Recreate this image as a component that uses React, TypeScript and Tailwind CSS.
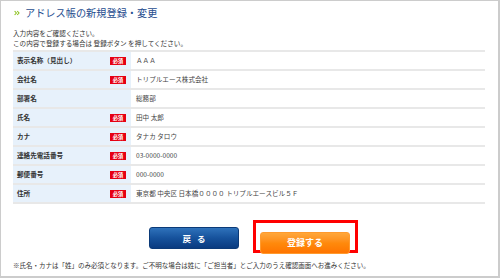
const rows = [
  { label: "表示名称（見出し）", required: true, value: "ＡＡＡ" },
  { label: "会社名", required: true, value: "トリプルエース株式会社" },
  { label: "部署名", required: false, value: "総務部" },
  { label: "氏名", required: true, value: "田中 太郎" },
  { label: "カナ", required: true, value: "タナカ タロウ" },
  { label: "連絡先電話番号", required: true, value: "03-0000-0000" },
  { label: "郵便番号", required: true, value: "000-0000" },
  { label: "住所", required: true, value: "東京都 中央区 日本橋００００ トリプルエースビル５Ｆ" },
];

export default function App() {
  return (
    <div
      className="w-[500px] h-[278px] box-border border border-r-2 border-b-2 border-[#cccccc] bg-white pl-[12px] pr-[13px] flex flex-col text-[#333333]"
      style={{ fontFamily: '"Noto Sans CJK JP", "Noto Sans", sans-serif' }}
    >
      {/* Title */}
      <div className="mt-[2px] h-[20px] flex items-center gap-[5px] pl-[1px]">
        <svg width="6" height="6" viewBox="0 0 6 6" className="shrink-0">
          <path d="M0.6 1 L2.4 3 L0.6 5" fill="none" stroke="#8cc11f" strokeWidth="1.1" />
          <path d="M3.2 1 L5 3 L3.2 5" fill="none" stroke="#8cc11f" strokeWidth="1.1" />
        </svg>
        <h1 className="text-[10.2px] leading-[20px] text-[#1f4d8f] whitespace-nowrap">
          アドレス帳の新規登録・変更
        </h1>
      </div>

      {/* Intro */}
      <div className="mt-[5px] text-[6.6px] leading-[10px] text-[#333333] whitespace-nowrap">
        <p>入力内容をご確認ください。</p>
        <p>この内容で登録する場合は 登録ボタン を押してください。</p>
      </div>

      {/* Table */}
      <div className="mt-[2px] border-t-2 border-[#e8e8e8]">
        {rows.map((row) => (
          <div key={row.label} className="flex h-[19px] border-b-2 border-[#e8e8e8]">
            <div className="w-[118px] shrink-0 bg-[#e7f1fb] flex items-center justify-between pl-[4px] pr-[5px]">
              <span className="text-[6.6px] font-bold text-[#333333] whitespace-nowrap">{row.label}</span>
              {row.required && (
                <span className="w-[16px] h-[8px] bg-[#e60012] text-white text-[5.2px] font-bold leading-[8px] text-center">
                  必須
                </span>
              )}
            </div>
            <div className="flex-1 flex items-center pl-[5px] text-[6.6px] text-[#444444] whitespace-nowrap">
              {row.value}
            </div>
          </div>
        ))}
      </div>

      {/* Buttons */}
      <div className="mt-[16px] flex items-start pl-[136px]">
        <button className="mt-[7px] w-[90px] h-[22px] rounded-[3px] border border-[#0b3a78] bg-gradient-to-b from-[#2f72bb] via-[#16529c] to-[#0a3b80] text-white text-[8.5px] font-bold tracking-[6px] pl-[6px]">
          戻る
        </button>
        <div className="ml-[14px] w-[105px] h-[33px] border-[3px] border-[#ff0000] pt-[4px] pl-[4px]">
          <button className="w-[90px] h-[22px] rounded-[3px] border border-[#ff9a2e] bg-gradient-to-b from-[#ffa73a] via-[#ff8a0c] to-[#ff7400] text-white text-[9px] font-bold">
            登録する
          </button>
        </div>
      </div>

      {/* Footer note */}
      <p className="mt-[7px] text-[6.5px] leading-[10px] text-[#333333] whitespace-nowrap">
        ※氏名・カナは「姓」のみ必須となります。ご不明な場合は姓に「ご担当者」とご入力のうえ確認画面へお進みください。
      </p>
    </div>
  );
}
